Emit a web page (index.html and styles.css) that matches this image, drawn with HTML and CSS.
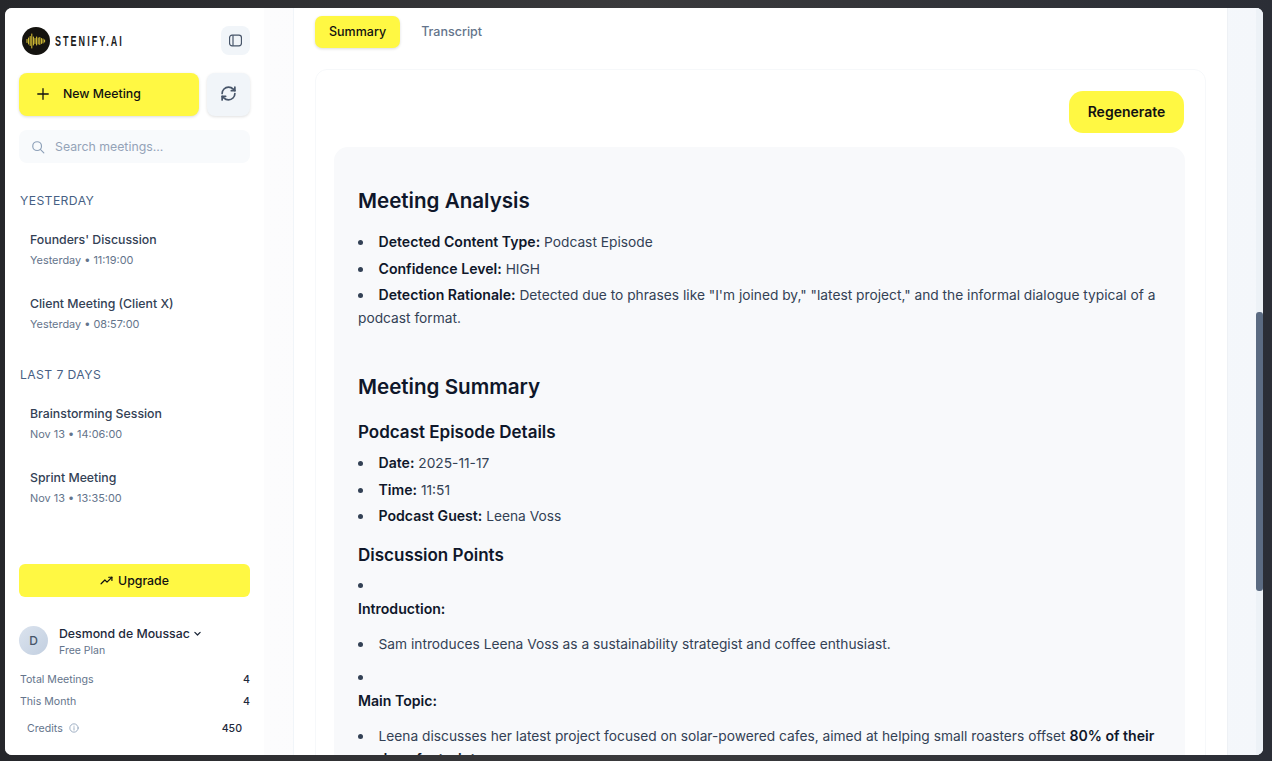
FILE: index.html
```html
<!DOCTYPE html>
<html lang="en">
<head>
  <meta charset="UTF-8">
  <meta name="viewport" content="width=device-width, initial-scale=1.0">
  <title>Stenify.AI</title>
  <link rel="stylesheet" href="styles.css">
</head>
<body>
  <div class="window">
    <aside class="sidebar">
      <div class="brand-row">
        <div class="brand">
          <svg class="brand-mark" viewBox="0 0 28 28" width="28" height="28">
            <circle cx="14" cy="14" r="14" fill="#14130f"/>
            <g stroke="#f5dc3c" stroke-width="0.9" stroke-linecap="round">
              <path d="M5 12.5v3M6.6 11v6M8.2 9.5v9M9.8 7v14M11.4 10v8M13 11.5v5M14.6 10v8M16.2 11v6M17.8 10.5v7M19.4 11.5v5M21 12v4M22.6 13v2"/>
            </g>
          </svg>
          <span class="brand-name">STENIFY.AI</span>
        </div>
        <button class="collapse-btn" aria-label="Toggle sidebar">
          <svg viewBox="0 0 24 24" width="15" height="15" fill="none" stroke="#475569" stroke-width="1.9">
            <rect x="2.5" y="3.5" width="19" height="17" rx="4"/>
            <path d="M8 3.5v17"/>
          </svg>
        </button>
      </div>

      <div class="action-row">
        <button class="new-btn">
          <svg viewBox="0 0 24 24" width="14" height="14" fill="none" stroke="#111" stroke-width="2.2" stroke-linecap="round">
            <path d="M12 3v18M3 12h18"/>
          </svg>
          New Meeting
        </button>
        <button class="refresh-btn" aria-label="Refresh">
          <svg viewBox="0 0 24 24" width="17" height="17" fill="none" stroke="#475569" stroke-width="2.4" stroke-linecap="round" stroke-linejoin="round">
            <path d="M3 12a9 9 0 0 1 9-9 9.75 9.75 0 0 1 6.74 2.74L21 8"/>
            <path d="M21 3v5h-5"/>
            <path d="M21 12a9 9 0 0 1-9 9 9.75 9.75 0 0 1-6.74-2.74L3 16"/>
            <path d="M8 16H3v5"/>
          </svg>
        </button>
      </div>

      <div class="search">
        <svg viewBox="0 0 24 24" width="14" height="14" fill="none" stroke="#8da0b8" stroke-width="2" stroke-linecap="round">
          <circle cx="10.5" cy="10.5" r="7.5"/>
          <path d="M16 16l6 6"/>
        </svg>
        <span>Search meetings...</span>
      </div>

      <div class="group-label first">YESTERDAY</div>
      <div class="meeting">
        <div class="meeting-title">Founders' Discussion</div>
        <div class="meeting-date">Yesterday • 11:19:00</div>
      </div>
      <div class="meeting">
        <div class="meeting-title">Client Meeting (Client X)</div>
        <div class="meeting-date">Yesterday • 08:57:00</div>
      </div>

      <div class="group-label">LAST 7 DAYS</div>
      <div class="meeting">
        <div class="meeting-title">Brainstorming Session</div>
        <div class="meeting-date">Nov 13 • 14:06:00</div>
      </div>
      <div class="meeting">
        <div class="meeting-title">Sprint Meeting</div>
        <div class="meeting-date">Nov 13 • 13:35:00</div>
      </div>

      <div class="sidebar-foot">
        <button class="upgrade-btn">
          <svg viewBox="0 0 24 24" width="13" height="13" fill="none" stroke="#111" stroke-width="2.2" stroke-linecap="round" stroke-linejoin="round">
            <path d="M2 18l7-7 4 4 9-9"/>
            <path d="M16 6h6v6"/>
          </svg>
          Upgrade
        </button>
        <div class="user">
          <div class="avatar">D</div>
          <div class="user-info">
            <div class="user-name">Desmond de Moussac
              <svg viewBox="0 0 24 24" width="9" height="9" fill="none" stroke="#1e293b" stroke-width="3.4" stroke-linecap="round" stroke-linejoin="round">
                <path d="M5 9l7 7 7-7"/>
              </svg>
            </div>
            <div class="user-plan">Free Plan</div>
          </div>
        </div>
        <div class="stat"><span>Total Meetings</span><b>4</b></div>
        <div class="stat"><span>This Month</span><b>4</b></div>
        <div class="stat credits">
          <span>Credits
            <svg viewBox="0 0 24 24" width="10" height="10" fill="none" stroke="#8da0b8" stroke-width="2" stroke-linecap="round">
              <circle cx="12" cy="12" r="10"/>
              <path d="M12 11v6M12 7.5v.5"/>
            </svg>
          </span>
          <b>450</b>
        </div>
      </div>
    </aside>

    <main class="main">
      <div class="panel">
        <div class="tabs">
          <button class="tab active">Summary</button>
          <button class="tab">Transcript</button>
        </div>

        <div class="card">
          <div class="card-actions">
            <button class="regen-btn">Regenerate</button>
          </div>

          <article class="summary">
            <h2>Meeting Analysis</h2>
            <ul>
              <li><b>Detected Content Type:</b> Podcast Episode</li>
              <li><b>Confidence Level:</b> HIGH</li>
              <li class="inside"><b>Detection Rationale:</b> Detected due to phrases like "I'm joined by," "latest project," and the informal dialogue typical of a podcast format.</li>
            </ul>

            <h2 class="second">Meeting Summary</h2>
            <h3>Podcast Episode Details</h3>
            <ul>
              <li><b>Date:</b> 2025-11-17</li>
              <li><b>Time:</b> 11:51</li>
              <li><b>Podcast Guest:</b> Leena Voss</li>
            </ul>

            <h3>Discussion Points</h3>
            <ul class="points">
              <li class="inside"><p><b>Introduction:</b></p></li>
              <li class="sub">Sam introduces Leena Voss as a sustainability strategist and coffee enthusiast.</li>
              <li class="inside"><p><b>Main Topic:</b></p></li>
              <li>Leena discusses her latest project focused on solar-powered cafes, aimed at helping small roasters offset <b>80% of their deep footprint</b>.</li>
            </ul>
          </article>
        </div>
      </div>
      <div class="scroll-track"></div>
      <div class="scrollbar"></div>
    </main>
  </div>
</body>
</html>
```

FILE: styles.css
```css
* {
  box-sizing: border-box;
}
html, body {
  height: 100%;
}
body {
  margin: 0;
  padding: 8px 9px 6px 5px;
  overflow: hidden;
  background: linear-gradient(90deg, #26272b, #3a3a3c 50%, #2b2e36);
  font-family: Inter, "Noto Sans", sans-serif;
  font-size: 14px;
  color: #1e293b;
}
button {
  font-family: inherit;
  border: none;
  cursor: pointer;
}
.window {
  display: flex;
  height: 747px;
  overflow: hidden;
  border-radius: 7px;
  background: #fff;
}

/* sidebar */
.sidebar {
  display: flex;
  flex-direction: column;
  flex: none;
  width: 259px;
  padding: 18px 14px 0;
  background: #fff;
  box-shadow: 4px 0 14px rgba(15, 23, 42, 0.04);
  position: relative;
}
.brand-row {
  display: flex;
  justify-content: space-between;
  align-items: center;
  height: 29px;
  margin-bottom: 18px;
}
.brand {
  display: flex;
  align-items: center;
  gap: 5px;
  margin-left: 3px;
}
.brand-name {
  display: inline-block;
  font-family: "Liberation Sans", sans-serif;
  font-weight: 700;
  font-size: 15px;
  letter-spacing: 3.4px;
  color: #1c1c1c;
  transform: scaleX(0.6);
  transform-origin: left center;
}
.collapse-btn {
  display: flex;
  align-items: center;
  justify-content: center;
  width: 29px;
  height: 29px;
  padding: 0;
  border-radius: 8px;
  background: #f1f5f9;
}
.action-row {
  display: flex;
  gap: 8px;
  margin-bottom: 14px;
}
.new-btn {
  display: flex;
  align-items: center;
  gap: 13px;
  width: 180px;
  height: 43px;
  padding: 0 17px 2px;
  border-radius: 8px;
  background: #fff843;
  box-shadow: 0 1px 3px rgba(0, 0, 0, 0.14);
  font-size: 12.3px;
  font-weight: 500;
  color: #111;
}
.refresh-btn {
  display: flex;
  align-items: center;
  justify-content: center;
  width: 43px;
  height: 43px;
  padding: 0 1px 2px 0;
  border-radius: 8px;
  background: #f1f5f9;
  box-shadow: 0 1px 3px rgba(0, 0, 0, 0.12);
}
.search {
  display: flex;
  align-items: center;
  gap: 10px;
  height: 33px;
  padding: 0 12px;
  border-radius: 8px;
  background: #f8fafc;
  font-size: 12.3px;
  color: #94a3b8;
}
.group-label {
  margin: 16px 0 14px 1px;
  font-size: 12.2px;
  line-height: 16px;
  letter-spacing: 0.4px;
  color: #475f84;
}
.group-label.first {
  margin-top: 30px;
}
.meeting {
  height: 64px;
  padding: 8px 11px 0;
}
.meeting-title {
  font-size: 12.3px;
  line-height: 18px;
  font-weight: 500;
  color: #334155;
}
.meeting-date {
  margin-top: 4px;
  font-size: 10.9px;
  line-height: 14px;
  color: #64748b;
}
.sidebar-foot {
  margin-top: auto;
  padding-bottom: 16px;
}
.upgrade-btn {
  display: flex;
  align-items: center;
  justify-content: center;
  gap: 5px;
  width: 100%;
  height: 33px;
  margin-bottom: 26px;
  border-radius: 6px;
  background: #fff843;
  font-size: 12.3px;
  font-weight: 500;
  color: #111;
}
.user {
  display: flex;
  align-items: center;
  gap: 11px;
  margin-bottom: 10px;
}
.avatar {
  display: flex;
  align-items: center;
  justify-content: center;
  width: 29px;
  height: 29px;
  border-radius: 50%;
  background: linear-gradient(135deg, #dbe3ee, #c2cfe0);
  font-size: 12px;
  font-weight: 500;
  color: #475569;
}
.user-info {
  padding-top: 2px;
}
.user-name {
  font-size: 12.3px;
  line-height: 17px;
  font-weight: 500;
  color: #1e293b;
}
.user-plan {
  margin-top: 2px;
  font-size: 10.5px;
  line-height: 14px;
  color: #64748b;
}
.stat {
  display: flex;
  justify-content: space-between;
  align-items: center;
  height: 22px;
  padding-left: 1px;
  font-size: 10.6px;
  color: #64748b;
}
.stat b {
  font-weight: 500;
  color: #1e293b;
}
.credits {
  height: 27px;
  padding: 5px 8px 0;
}
.credits svg {
  margin-left: 3px;
  vertical-align: -1px;
}

/* main */
.main {
  position: relative;
  flex: 1;
  padding-left: 29px;
  background: linear-gradient(90deg, #fcfcfd, #f4f7fb);
}
.panel {
  width: 935px;
  height: 100%;
  padding: 8px 21px 0;
  background: #fff;
  border-left: 1px solid #f1f5f9;
  border-right: 1px solid #eef1f5;
  overflow: hidden;
}
.scroll-track {
  position: absolute;
  top: 0;
  right: 0;
  bottom: 0;
  width: 7px;
  background: #edf2f7;
}
.scrollbar {
  position: absolute;
  top: 304px;
  right: 0;
  width: 7px;
  height: 279px;
  border-radius: 3px;
  background: #5b6b82;
}
.tabs {
  display: flex;
  gap: 7px;
  margin-bottom: 21px;
}
.tab {
  height: 32px;
  padding: 0 14px 1px;
  border-radius: 7px;
  background: transparent;
  font-size: 12.5px;
  font-weight: 500;
  color: #64748b;
}
.tab.active {
  background: #fff843;
  box-shadow: 0 1px 3px rgba(0, 0, 0, 0.14);
  color: #111;
}
.card {
  padding: 21px 21px 0 18px;
  border: 1px solid #f6f8fa;
  border-radius: 12px;
}
.card-actions {
  display: flex;
  justify-content: flex-end;
  margin-bottom: 14px;
}
.regen-btn {
  width: 115px;
  height: 42px;
  padding-bottom: 2px;
  border-radius: 14px;
  background: #fff843;
  font-size: 14px;
  font-weight: 600;
  color: #111;
}
.summary {
  margin-right: -1px;
  padding: 40px 24px 40px;
  border-radius: 14px 14px 0 0;
  background: #f8f9fb;
  font-size: 13.75px;
  line-height: 23px;
  color: #334155;
}
.summary b {
  font-size: 14.1px;
  line-height: 1;
  font-weight: 600;
  color: #0f172a;
}
.summary h2 {
  margin: 0 0 16px;
  font-size: 20.6px;
  line-height: 28px;
  font-weight: 600;
  color: #0f172a;
}
.summary h2.second {
  margin-top: 43px;
  margin-bottom: 19px;
}
.summary h3 {
  margin: 0 0 8px;
  font-size: 17px;
  line-height: 24px;
  font-weight: 600;
  color: #0f172a;
}
.summary ul {
  margin: 0 0 15px;
  padding: 0;
  list-style: none;
}
.summary ul.points {
  margin-top: -1px;
}
.summary li {
  margin-bottom: 3.5px;
  padding-left: 20.5px;
  text-indent: -20.5px;
}
.summary li::before {
  content: "";
  display: inline-block;
  width: 5px;
  height: 5px;
  margin-right: 15.5px;
  border-radius: 50%;
  background: #334155;
  vertical-align: 2px;
}
.summary li.inside {
  padding-left: 0;
  text-indent: 0;
}
.summary li.sub {
  margin-bottom: 9.5px;
}
.summary li p {
  margin: 1px 0 12px;
}
```
